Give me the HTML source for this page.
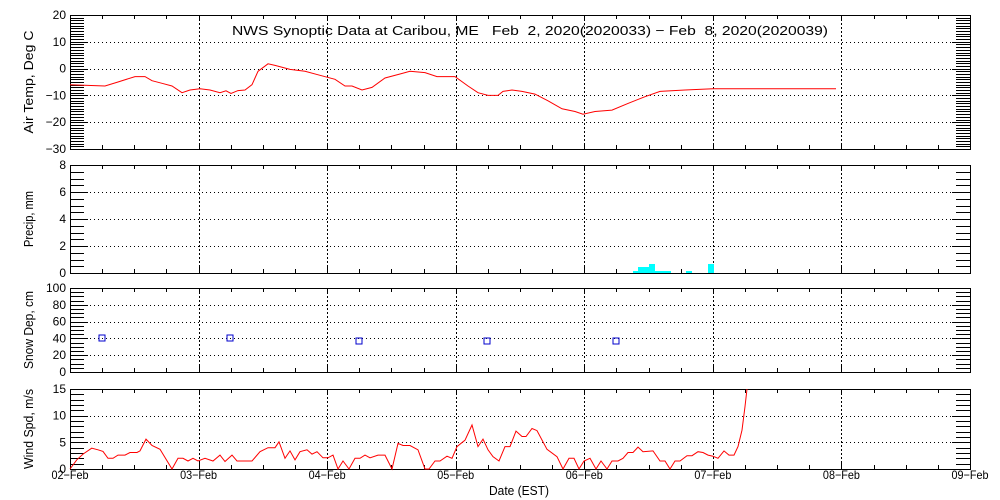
<!DOCTYPE html>
<html><head><meta charset="utf-8"><style>
html,body{margin:0;padding:0;background:#fff;width:1000px;height:500px;overflow:hidden}
svg{display:block}
text{font-family:"Liberation Sans",sans-serif;fill:#000}
</style></head><body>
<svg id="s" width="1000" height="500" xmlns="http://www.w3.org/2000/svg"></svg>
<script>
const S=document.getElementById('s');let h='';
const X0=70,X1=970,DX=(X1-X0)/7;
const P=[
 {t:15,b:149,min:-30,max:20,maj:10,mn:1,grid:[10,0,-10,-20],lab:'Air Temp, Deg C',tl:103,labs:[20,10,0,-10,-20,-30]},
 {t:165,b:273,min:0,max:8,maj:2,mn:0.5,grid:[2,4,6],lab:'Precip, mm',tl:56,labs:[8,6,4,2,0]},
 {t:288,b:372,min:0,max:100,maj:20,mn:5,grid:[20,40,60,80],lab:'Snow Dep, cm',tl:78,labs:[100,80,60,40,20,0]},
 {t:389,b:469,min:0,max:15,maj:5,mn:1,grid:[5,10],lab:'Wind Spd, m/s',tl:80,labs:[15,10,5,0]}];
function Y(p,v){return p.b-(v-p.min)/(p.max-p.min)*(p.b-p.t);}
P.forEach((p,i)=>{
 p.grid.forEach(v=>{const y=Math.round(Y(p,v))+.5;h+=`<line x1="${X0}" x2="${X1}" y1="${y}" y2="${y}" stroke="#000" stroke-dasharray="1,3"/>`;});
 for(let d=1;d<7;d++){const x=Math.round(X0+d*DX)+.5;h+=`<line x1="${x}" x2="${x}" y1="${p.t}" y2="${p.b}" stroke="#000" stroke-dasharray="2,2"/>`;}
 for(let k=1;k<28;k++){const x=Math.round(X0+k*DX/4)+.5;const L=k%4?4:6;h+=`<line x1="${x}" x2="${x}" y1="${p.t}" y2="${p.t+L}" stroke="#000"/><line x1="${x}" x2="${x}" y1="${p.b}" y2="${p.b-L}" stroke="#000"/>`;}
 for(let v=p.min;v<=p.max+1e-6;v+=p.mn){const y=Math.round(Y(p,v))+.5;const mj=Math.abs(v/p.maj-Math.round(v/p.maj))<1e-6;const L=mj?18:14;
  h+=`<line x1="${X0}" x2="${X0+L}" y1="${y}" y2="${y}" stroke="#000"/><line x1="${X1}" x2="${X1-L}" y1="${y}" y2="${y}" stroke="#000"/>`;}
 p.labs.forEach(v=>{const y=Y(p,v)+4;h+=`<text x="66" y="${y}" font-size="12" text-anchor="end">${String(v).replace('-','\u2212')}</text>`;});
 h+=`<rect x="${X0+.5}" y="${p.t+.5}" width="${X1-X0}" height="${p.b-p.t}" fill="none" stroke="#000"/>`;
 const cy=(p.t+p.b)/2;h+=`<text transform="translate(33,${cy}) rotate(-90)" font-size="13" text-anchor="middle" textLength="${p.tl}" lengthAdjust="spacingAndGlyphs">${p.lab}</text>`;
});
const T=[[70,-6],[105,-6.5],[118,-5],[135,-3],[145,-3],[152,-4.5],[162,-5.5],[172,-6.5],[182,-9],[190,-8],[200,-7.5],[210,-8],[220,-9],[226,-8.3],[231,-9.3],[238,-8.2],[245,-8],[252,-6],[258,-1],[268,1.8],[275,1.2],[290,-0.3],[305,-1],[320,-2.5],[335,-4],[345,-6.5],[352,-6.5],[362,-8],[372,-7],[385,-3.5],[400,-2],[410,-1],[425,-1.5],[437,-3],[455,-3],[468,-6.5],[478,-9],[488,-10],[498,-10],[503,-8.5],[512,-8],[522,-8.5],[535,-9.5],[548,-12],[562,-15],[575,-16],[583,-17],[595,-16],[612,-15.5],[628,-13],[645,-10.5],[660,-8.5],[685,-8],[713,-7.5],[836,-7.5]];
h+=`<polyline fill="none" stroke="#f00" points="${T.map(q=>q[0]+','+Y(P[0],q[1]).toFixed(1)).join(' ')}"/>`;
[[633,643,2],[638,649,6],[649,655,9],[655,671,2],[686,692,2],[708,714,9]].forEach(b=>{h+=`<rect x="${b[0]}" y="${273-b[2]}" width="${b[1]-b[0]}" height="${b[2]}" fill="#0ff"/>`;});
[[102,40],[230,40],[359,37],[487,37],[616,37]].forEach(s=>{const y=Y(P[2],s[1]);h+=`<rect x="${s[0]-3}" y="${(y-3).toFixed(0)}" width="6" height="6" fill="none" stroke="#00c"/>`;});
const W=[[70,0],[76.7,1.7],[83,2.8],[91.7,3.9],[98,3.6],[103,3.3],[108,2],[113,2],[118,2.6],[125,2.6],[130,3.1],[137,3.1],[140,3.4],[146,5.6],[152,4.4],[160,3.7],[172,0],[178,2],[183,2],[188,1.5],[193,2],[198,1.5],[205,2],[213,1.5],[220,2.6],[225,1.4],[232,2.6],[237,1.5],[252,1.5],[260,3.25],[268,4],[275,4],[279,5.1],[285,2],[290,3.4],[295,1.7],[300,3.25],[307,3.6],[312,2.8],[317,3.25],[323,2.1],[328,2.1],[333,2.6],[338,0],[343,1.5],[349,0],[355,2],[360,2],[365,2.6],[370,2.1],[378,2.6],[385,2.6],[392,0],[398,4.8],[403,4.4],[410,4.4],[418,3.6],[425,0],[429,0],[435,1.5],[440,1.5],[447,2.4],[452,2],[457,4.2],[465,5.4],[472,8.25],[478,4.2],[483,5.6],[488,3.6],[493,2.3],[499,1.5],[505,4.2],[510,4.2],[516,7.1],[522,6.1],[526,6.1],[532,7.6],[537,7.2],[547,3.7],[557,2.3],[563,0],[569,2],[574,2],[579,0],[584,1.5],[590,2],[596,0],[601,1.5],[607,0],[612,1.5],[618,1.5],[623,2],[628,3.1],[633,3.1],[638,4.1],[643,3.25],[653,3.4],[660,1.5],[665,1.5],[670,0],[675,1.5],[680,1.5],[687,2.5],[692,2.5],[698,3.25],[703,3.1],[708,2.6],[713,2.4],[718,2],[724,3.4],[729,2.6],[734,2.6],[738,4.2],[742,7.3],[745,11.7],[747,15]];
h+=`<polyline fill="none" stroke="#f00" points="${W.map(q=>q[0]+','+Y(P[3],q[1]).toFixed(1)).join(' ')}"/>`;
['02-Feb','03-Feb','04-Feb','05-Feb','06-Feb','07-Feb','08-Feb','09-Feb'].forEach((l,d)=>{h+=`<text x="${X0+d*DX}" y="479" font-size="12" text-anchor="middle" textLength="37" lengthAdjust="spacingAndGlyphs">${l.replace('-','\u2212')}</text>`;});
h+=`<text x="519" y="495" font-size="13" text-anchor="middle" textLength="60" lengthAdjust="spacingAndGlyphs">Date (EST)</text>`;
h+=`<text x="232" y="35" font-size="13" textLength="596" lengthAdjust="spacingAndGlyphs" xml:space="preserve">NWS Synoptic Data at Caribou, ME   Feb  2, 2020(2020033) \u2212 Feb  8, 2020(2020039)</text>`;
S.innerHTML=h;
</script>
</body></html>
